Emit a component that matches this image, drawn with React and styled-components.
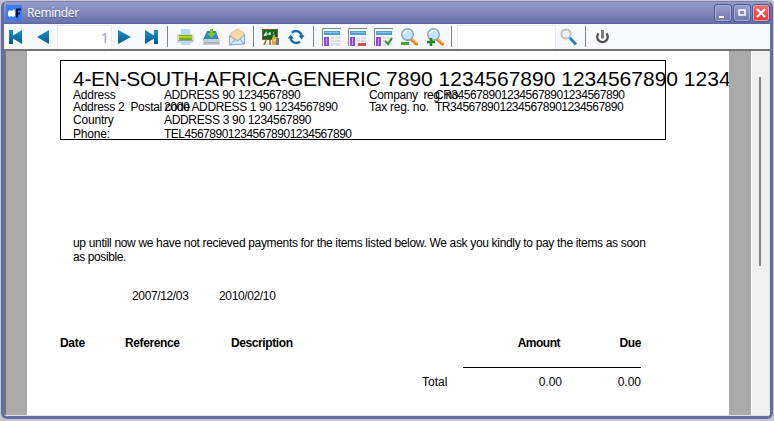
import React from "react";
import styled, { createGlobalStyle } from "styled-components";

const Global = createGlobalStyle`
  * { box-sizing: border-box; }
  body { margin: 0; background: #cfcfcf; overflow: hidden; }
`;

const Window = styled.div`
  width: 774px;
  height: 421px;
  padding: 1px 1px 0 1px;
  background: #c6c6c8;
`;
const Frame = styled.div`
  height: 418px;
  border: solid #626da9;
  border-width: 1px 3px 3px 3px;
  border-top-color: #7680b2;
  border-radius: 6px;
  overflow: hidden;
  display: flex;
  flex-direction: column;
  background: #fff;
`;
const TitleBar = styled.header`
  height: 22px;
  flex: none;
  display: flex;
  align-items: center;
  padding: 0 1px 0 2px;
  background: linear-gradient(#939bc6, #7e88bb 50%, #6973ad 92%, #59649f);
`;
const AppIcon = styled.svg`
  width: 16px;
  height: 16px;
  margin-right: 5px;
`;
const Title = styled.h1`
  flex: 1;
  margin: 0;
  font: 400 12px/16px "Noto Sans", sans-serif;
  letter-spacing: -0.42px;
  color: #fff;
  text-shadow: 0 1px 1px #4b5590;
`;
const WindowButton = styled.button`
  width: 16px;
  height: 16px;
  padding: 0;
  border: 1px solid ${(p) => (p.$close ? "#f7a0a0" : "#a9b0d6")};
  border-radius: 2px;
  outline: 1px solid #4d5894;
  background: ${(p) => (p.$close ? "linear-gradient(#f36b68, #e83a3a)" : "linear-gradient(#969ec9, #6f79b2)")};
  display: flex;
  svg { width: 14px; height: 14px; flex: none; }
`;
const WindowButtons = styled.div`
  display: flex;
  gap: 3px;
`;

const ToolBar = styled.nav`
  height: 27px;
  flex: none;
  display: flex;
  align-items: center;
  background: #f8f9fc;
  border-bottom: 2px solid #737373;
`;
const Tool = styled.button`
  width: ${(p) => p.$w || 26}px;
  height: 25px;
  flex: none;
  padding: 0;
  border: 0;
  background: none;
  display: flex;
  align-items: center;
  justify-content: center;
  svg { width: 20px; height: 20px; }
`;
const Separator = styled.i`
  flex: none;
  width: 1px;
  height: 21px;
  margin: 0 4px 0 3px;
  background: #858585;
`;
const Field = styled.div`
  flex: none;
  width: ${(p) => p.$w}px;
  height: 24px;
  margin: 1px 0 0 1px;
  padding-right: 2px;
  background: #fff;
  border: solid #ececee;
  border-width: 1px 1px 0 1px;
  text-align: right;
  font: 14.5px/22px "Noto Sans", sans-serif;
  color: #98a2b4;
`;

const Viewer = styled.main`
  flex: 1;
  min-height: 0;
  display: flex;
  border-left: 2px solid #767676;
  border-bottom: 1px solid #e2e2e2;
  background: #aaa;
`;
const Sheet = styled.article`
  width: 702px;
  margin-left: 21px;
  overflow: hidden;
  background: #fff;
  color: #000;
  font: 12px/14px "Liberation Sans", Arial, sans-serif;
  white-space: pre;
`;
const ScrollTrack = styled.div`
  width: 19px;
  margin-left: 22px;
  border-left: 1px solid #fff;
  border-right: 1px solid #e0e0e0;
  background: #f0f0f0;
  padding: 26px 0 0 7px;
`;
const ScrollThumb = styled.div`
  width: 2px;
  height: 189px;
  background: #828282;
`;

const Letterhead = styled.section`
  width: 606px;
  height: 80px;
  margin: 9px 0 0 33px;
  padding: 6px 0 0 12px;
  border: 1px solid #000;
`;
const Company = styled.h2`
  margin: 0;
  height: 21px;
  font-size: 21px;
  line-height: 24px;
  font-weight: 400;
`;
const HeadLine = styled.div`
  display: grid;
  grid-template-columns: 91px 205px 66px 1fr;
  height: ${(p) => p.$h}px;
`;
const Run = styled.span`
  letter-spacing: ${(p) => p.$ls || 0}px;
`;
const Letter = styled.p`
  margin: 96px 0 0 46px;
  line-height: 14px;
`;
const Dates = styled.div`
  display: grid;
  grid-template-columns: 87px 1fr;
  margin: 25px 0 0 105px;
`;
const TableHead = styled.div`
  display: grid;
  grid-template-columns: 65px 106px 1fr 100px 81px;
  width: 581px;
  margin: 33px 0 0 33px;
  font-weight: 700;
`;
const Cell = styled.span`
  text-align: ${(p) => (p.$right ? "right" : "left")};
  letter-spacing: ${(p) => p.$ls || 0}px;
`;
const Rule = styled.hr`
  width: 178px;
  height: 1px;
  margin: 17px 0 0 436px;
  border: 0;
  background: #000;
`;
const Totals = styled.div`
  display: grid;
  grid-template-columns: 61px 1fr 79px;
  width: 219px;
  margin: 7px 0 0 395px;
`;

const I = ({ children }) => <svg viewBox="0 0 20 20">{children}</svg>;
const BlueFill = () => (
  <linearGradient id="blue" x1="0" y1="0" x2="0" y2="1">
    <stop offset="0" stopColor="#1c91c4" /><stop offset="1" stopColor="#07598f" />
  </linearGradient>
);
const First = () => <I><defs><BlueFill /></defs><path d="M3 3h4v5.500l9-5.500v14l-9-5.500v5.500H3z" fill="url(#blue)" /></I>;
const Prev = () => <I><path d="M17 3v14L5 10z" fill="url(#blue)" /></I>;
const Next = () => <I><path d="M3 3v14l13-7z" fill="url(#blue)" /></I>;
const Last = () => <I><path d="M17 3h-4v5.500L4 3v14l9-5.500v5.500h4z" fill="url(#blue)" /></I>;
const Printer = () => (
  <I>
    <path d="M6 2h9v7H6z" fill="#b5d9fa" />
    <rect x="2" y="7" width="17" height="9" rx="2" fill="#d3d7dc" />
    <rect x="4" y="8" width="13" height="5" rx="1" fill="#72a915" />
    <rect x="4" y="9" width="13" height="2" fill="#a8d62c" />
    <rect x="3" y="13" width="15" height="1" fill="#999fa6" />
    <path d="M6 14h9v4H6z" fill="#b9dcfa" />
  </I>
);
const Disk = () => (
  <I>
    <path d="M6 4h9l3 9v4q0 1-1 1H3q-1 0-1-1v-4z" fill="#3486b4" />
    <rect x="2" y="12" width="17" height="6" rx="1.5" fill="#c9d0d7" />
    <rect x="3" y="15" width="15" height="1.500" fill="#a2abb4" />
    <path d="M9 2h3v4h3l-4.500 5L6 6h3z" fill="#7cc52c" />
  </I>
);
const Mail = () => (
  <I>
    <path d="M2 9l8-7 8 5v10L3 18z" fill="#a9c7ec" />
    <path d="M4 6l7-4 6 4-1 6-5 2-7-4z" fill="#f9d9a2" stroke="#eaac70" strokeWidth=".7" />
    <path d="M2.500 9l8 5 7-6v9l-15 1z" fill="#d7e8fc" stroke="#7e9ed2" strokeWidth=".9" />
    <path d="M3 18l5-5.500M17 17l-4-5" stroke="#7e9ed2" fill="none" />
  </I>
);
const Board = () => (
  <I>
    <path d="M6 11L3 18M9 12v6M12 11l3 6" stroke="#a05418" strokeWidth="1.5" />
    <rect x="1.500" y="2.500" width="15" height="10" fill="#0c6827" stroke="#8b552a" />
    <path d="M3 9l2-3v3M6 7h3M9 5v3M12 6h1M12 9h2" stroke="#fff" strokeWidth="1.200" fill="none" />
    <rect x="11" y="10" width="6" height="8" rx="1" fill="#e9a322" />
    <rect x="15" y="11" width="3" height="7" fill="#657b9b" />
    <path d="M12 13h3" stroke="#fff0a0" />
  </I>
);
const Refresh = () => (
  <I>
    <path d="M4.800 5.800A5.700 5.700 0 0 1 14.600 9.500M13 14.600A5.700 5.700 0 0 1 3.600 10.500" fill="none" stroke="#0d70a6" strokeWidth="2.300" />
    <path d="M11.500 8.500h6l-3 4zM.7 11.500h6L3.700 7.500z" fill="#0d70a6" />
  </I>
);
const Layout = ({ children }) => (
  <I>
    <path d="M1 1h19v18H1z" fill="#f4f5f8" />
    <path d="M1.500 19V1.500H20" stroke="#858585" fill="none" />
    <path d="M3 4h16v4H3z" fill="#4aa0d0" /><path d="M4 5h14v1H4z" fill="#83c4e4" />
    <path d="M3 10h5v9H3z" fill="#8a48e2" /><path d="M5 11h1v7H5z" fill="#c6a2f5" />
    <path d="M10 10h9v9h-9z" fill="#dbdce5" />
    <path d="M10 12.500h9M10 15.500h9M13.500 10v9" stroke="#f7f7fa" />
    {children}
  </I>
);
const Magnify = ({ plus }) => (
  <I>
    <path d="M12 12l5.500 5" stroke="#e87920" strokeWidth="3.300" strokeLinecap="round" />
    <path d="M13 12l5 4" stroke="#ffc744" strokeWidth="1.200" />
    <circle cx="8.500" cy="7.500" r="5.800" fill="#c5e4fa" stroke="#86a4bd" strokeWidth="1.400" />
    <path d="M5 7a4 4 0 0 1 6-3" stroke="#fff" strokeWidth="1.500" fill="none" />
    {plus ? <path d="M6 11v8M2 15h8" stroke="#1c8b27" strokeWidth="2.600" />
      : <path d="M2 16.500h8" stroke="#40a53b" strokeWidth="3.200" />}
  </I>
);
const Search = () => (
  <I>
    <path d="M10.500 10.500l6.500 7" stroke="#2886b9" strokeWidth="3" />
    <circle cx="7" cy="7" r="4.600" fill="#f2f2f4" stroke="#bfc0c3" strokeWidth="2" />
  </I>
);
const Power = () => (
  <I>
    <path d="M5.500 6.500a5.200 5.200 0 1 0 8 0" fill="none" stroke="#505050" strokeWidth="2.400" />
    <path d="M9.500 3v8.500" stroke="#7c7c7c" strokeWidth="3" />
  </I>
);

const rows = [
  { h: 12, label: "Address", value: "ADDRESS 90 1234567890", vs: -0.4, reg: "Company  reg. no.", rs: -0.4, no: "CR3456789012345678901234567890" },
  { h: 13, label: "Address 2  Postal code", value: "2000 ADDRESS 1 90 1234567890", vs: -0.38, reg: "Tax reg. no.", rs: -0.25, no: "TR3456789012345678901234567890" },
  { h: 14, label: "Country", value: "ADDRESS 3 90 1234567890", vs: -0.33 },
  { h: 14, label: "Phone:", value: "TEL456789012345678901234567890", vs: -0.49 },
];

export default function App() {
  return (
    <Window>
      <Global />
      <Frame>
        <TitleBar>
          <AppIcon viewBox="0 0 16 16">
            <rect width="16" height="16" fill="#3b7cf0" />
            <path d="M2 7l2-2 2 1 2-2 1 2v5l-2 1-2-1-2 1-1-2z" fill="#fff" />
            <path d="M11 12.500V4.500h4M11 8.500h3" stroke="#0a1040" strokeWidth="2" fill="none" />
          </AppIcon>
          <Title>Reminder</Title>
          <WindowButtons>
            <WindowButton><svg viewBox="0 0 14 14"><path d="M3 10h5v2H3z" fill="#fff" /></svg></WindowButton>
            <WindowButton><svg viewBox="0 0 14 14"><path d="M4 4h6v5H4z" fill="none" stroke="#fff" strokeWidth="1.500" /></svg></WindowButton>
            <WindowButton $close><svg viewBox="0 0 14 14"><path d="M3 3l8 8M11 3l-8 8" stroke="#fff" strokeWidth="2.200" /></svg></WindowButton>
          </WindowButtons>
        </TitleBar>
        <ToolBar>
          <Tool $w={24}><First /></Tool>
          <Tool $w={28}><Prev /></Tool>
          <Field $w={55}>1</Field>
          <Tool><Next /></Tool>
          <Tool><Last /></Tool>
          <Separator />
          <Tool><Printer /></Tool>
          <Tool><Disk /></Tool>
          <Tool><Mail /></Tool>
          <Separator />
          <Tool><Board /></Tool>
          <Tool><Refresh /></Tool>
          <Separator />
          <Tool><Layout /></Tool>
          <Tool><Layout><path d="M11 16h8v3h-8z" fill="#d84b50" /></Layout></Tool>
          <Tool><Layout><path d="M12 14l3 3 4-6" stroke="#2b8f3a" strokeWidth="2" fill="none" /></Layout></Tool>
          <Tool><Magnify /></Tool>
          <Tool><Magnify plus /></Tool>
          <Separator />
          <Field $w={99} />
          <Tool><Search /></Tool>
          <Separator />
          <Tool><Power /></Tool>
        </ToolBar>
        <Viewer>
          <Sheet>
            <Letterhead>
              <Company>
                <Run $ls={-0.3}>4-EN-SOUTH-AFRICA-GENERIC </Run>
                <Run>7890 1234567890 1234567890 1234567890</Run>
              </Company>
              {rows.map((r) => (
                <HeadLine key={r.label} $h={r.h}>
                  <Run $ls={r.h === 13 ? -0.3 : -0.2}>{r.label}</Run>
                  <Run $ls={r.vs}>{r.value}</Run>
                  <Run $ls={r.rs}>{r.reg}</Run>
                  <Run $ls={-0.49}>{r.no}</Run>
                </HeadLine>
              ))}
            </Letterhead>
            <Letter>
              <Run $ls={-0.33}>up untill now we have not recieved payments for the items listed below. We ask you kindly to pay the items as soon</Run>
              <br />
              <Run $ls={-0.4}>as posible.</Run>
            </Letter>
            <Dates><Run $ls={-0.36}>2007/12/03</Run><Run $ls={-0.36}>2010/02/10</Run></Dates>
            <TableHead>
              <Cell $ls={-0.3}>Date</Cell>
              <Cell $ls={-0.4}>Reference</Cell>
              <Cell $ls={-0.4}>Description</Cell>
              <Cell $right $ls={-0.5}>Amount</Cell>
              <Cell $right $ls={-0.4}>Due</Cell>
            </TableHead>
            <Rule />
            <Totals><Cell>Total</Cell><Cell $right>0.00</Cell><Cell $right>0.00</Cell></Totals>
          </Sheet>
          <ScrollTrack><ScrollThumb /></ScrollTrack>
        </Viewer>
      </Frame>
    </Window>
  );
}
